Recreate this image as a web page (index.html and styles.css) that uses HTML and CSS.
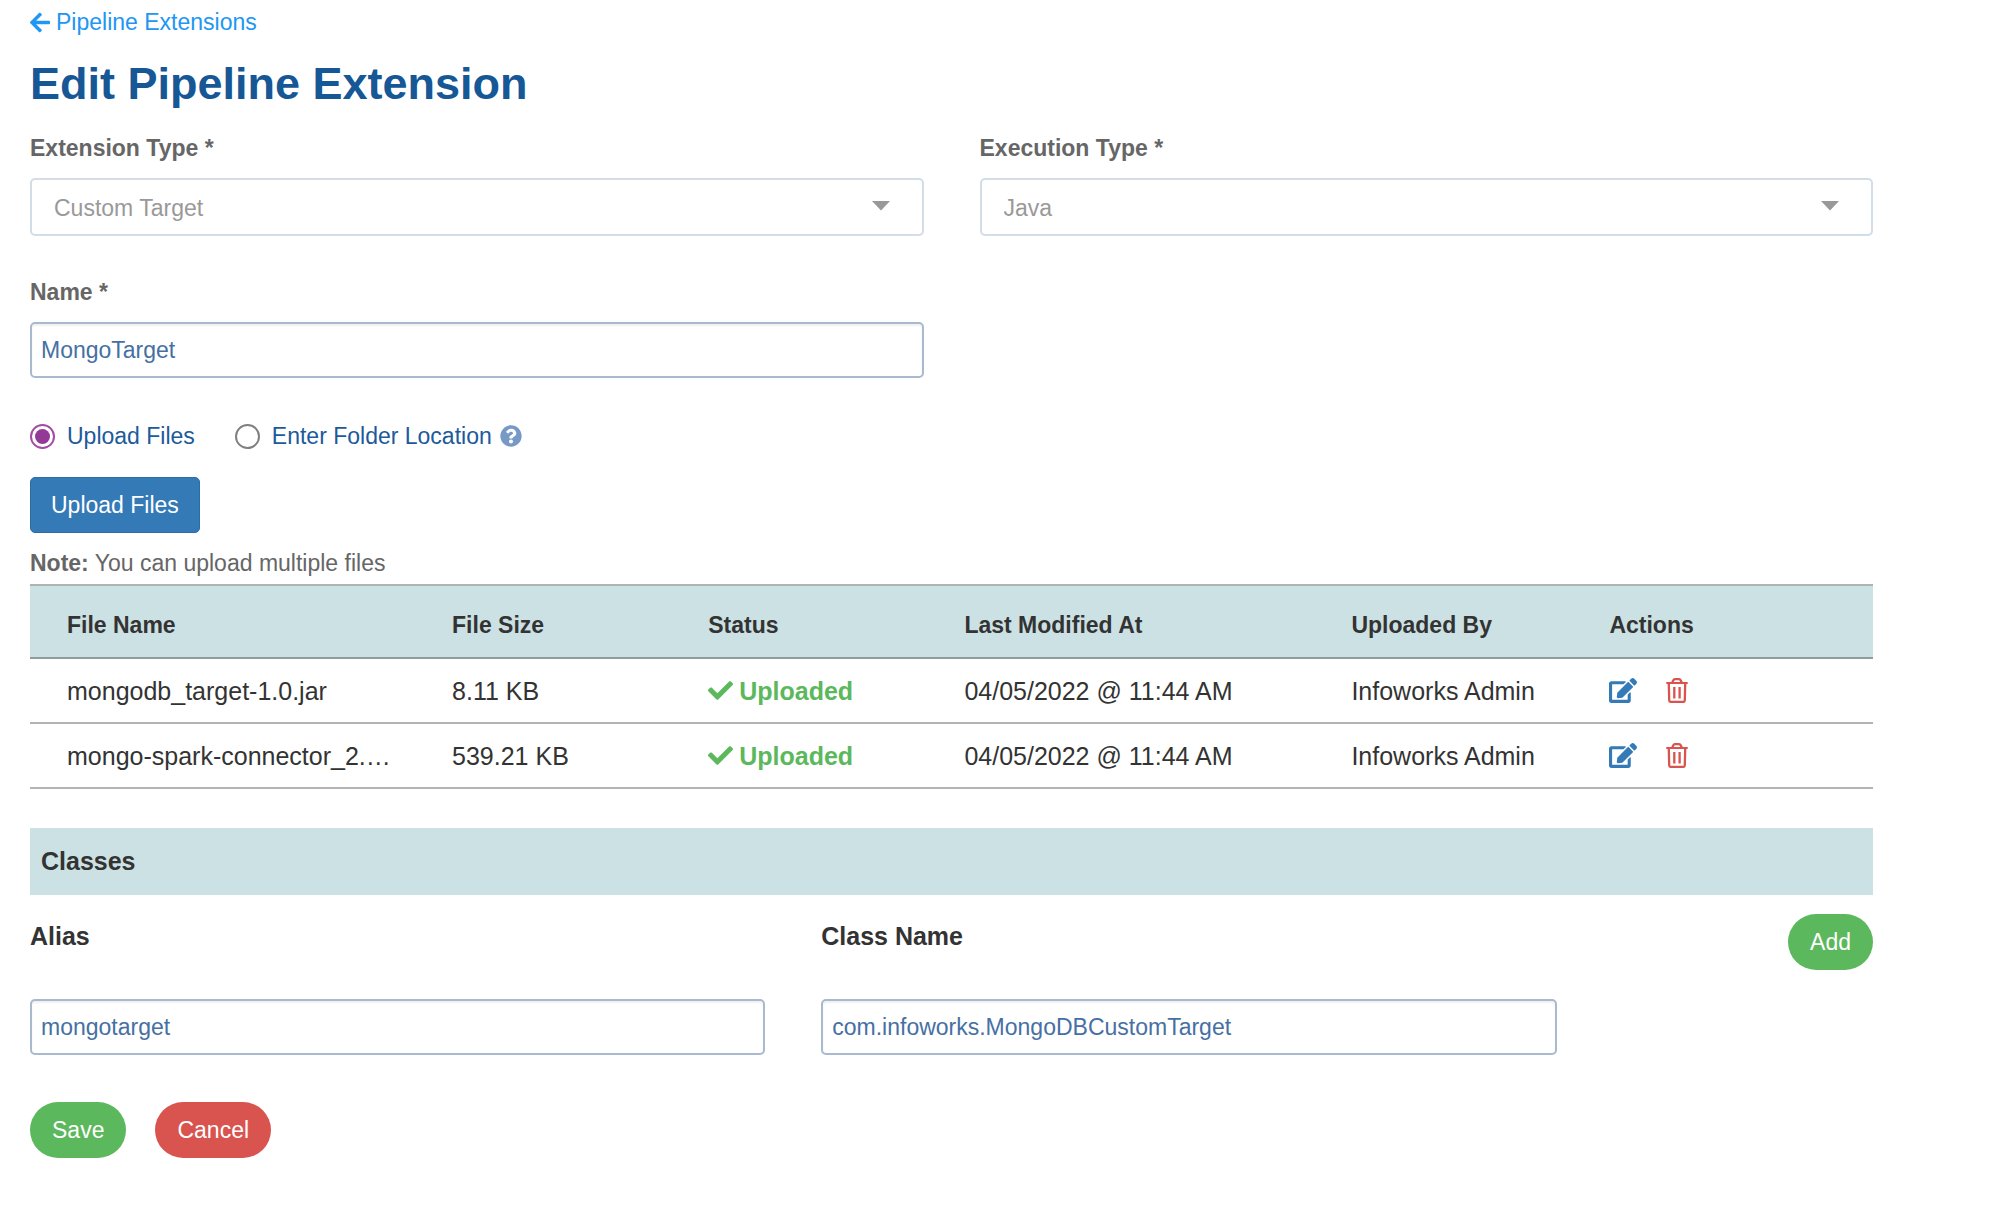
FILE: index.html
```html
<!DOCTYPE html>
<html lang="en">
<head>
  <meta charset="utf-8">
  <meta name="viewport" content="width=device-width, initial-scale=1">
  <title>Edit Pipeline Extension</title>
  <link rel="stylesheet" href="styles.css">
</head>
<body>
  <svg class="sprite" width="0" height="0" aria-hidden="true">
    <symbol id="arrow-left" viewBox="0 0 448 512"><path d="M257.5 445.1l-22.2 22.2c-9.4 9.4-24.6 9.4-33.9 0L7 273c-9.4-9.4-9.4-24.6 0-33.9L201.4 44.7c9.4-9.4 24.6-9.4 33.9 0l22.2 22.2c9.5 9.5 9.3 25-.4 34.3L136.6 216H424c13.3 0 24 10.7 24 24v32c0 13.3-10.7 24-24 24H136.6l120.5 114.8c9.8 9.3 10 24.8.4 34.3z"/></symbol>
    <symbol id="help" viewBox="0 0 512 512"><path d="M504 256c0 136.997-111.043 248-248 248S8 392.997 8 256C8 119.083 119.043 8 256 8s248 111.083 248 248zM262.655 90c-54.497 0-89.255 22.957-116.549 63.758-3.536 5.286-2.353 12.415 2.715 16.258l34.699 26.31c5.205 3.947 12.621 3.008 16.665-2.122 17.864-22.658 30.113-35.797 57.303-35.797 20.429 0 45.698 13.148 45.698 32.958 0 14.976-12.363 22.667-32.534 33.976C247.128 238.528 216 254.941 216 296v4c0 6.627 5.373 12 12 12h56c6.627 0 12-5.373 12-12v-1.333c0-28.462 83.186-29.647 83.186-106.667 0-58.002-60.165-102-116.531-102zM256 338c-25.365 0-46 20.635-46 46 0 25.364 20.635 46 46 46s46-20.636 46-46c0-25.364-20.635-46-46-46z"/></symbol>
    <symbol id="check" viewBox="0 0 512 512"><path d="M173.898 439.404l-166.4-166.4c-9.997-9.997-9.997-26.206 0-36.204l36.203-36.204c9.997-9.998 26.207-9.998 36.204 0L192 312.69 432.095 72.596c9.997-9.997 26.207-9.997 36.204 0l36.203 36.204c9.997 9.997 9.997 26.206 0 36.204l-294.4 294.401c-9.998 9.997-26.207 9.997-36.204-.001z"/></symbol>
    <symbol id="edit" viewBox="0 0 576 512"><path d="M402.6 83.2l90.2 90.2c3.8 3.8 3.8 10 0 13.8L274.4 405.6l-92.8 10.3c-12.4 1.4-22.9-9.1-21.5-21.5l10.3-92.8L388.8 83.2c3.8-3.8 10-3.8 13.8 0zm162-22.9l-48.8-48.8c-15.2-15.2-39.9-15.2-55.2 0l-35.4 35.4c-3.8 3.8-3.8 10 0 13.8l90.2 90.2c3.8 3.8 10 3.8 13.8 0l35.4-35.4c15.2-15.3 15.2-40 0-55.2zM384 346.2V448H64V128h229.8c3.2 0 6.2-1.3 8.5-3.5l40-40c7.6-7.6 2.1-20.5-8.5-20.5H48C21.5 64 0 85.5 0 112v352c0 26.5 21.5 48 48 48h352c26.5 0 48-21.5 48-48V306.2c0-10.7-12.9-16-20.5-8.5l-40 40c-2.2 2.3-3.5 5.3-3.5 8.5z"/></symbol>
    <symbol id="trash" viewBox="0 0 22 25"><g fill="none" stroke="currentColor" stroke-width="2.3"><path d="M0.3 5H21.7" stroke-width="2"/><path d="M6.2 4.8L7.2 2.5Q7.8 1.2 9 1.2H13Q14.2 1.2 14.8 2.5L15.8 4.8"/><path d="M2.8 5.5L3.2 22.2Q3.3 23.9 5 23.9H17Q18.7 23.9 18.8 22.2L19.2 5.5"/><path d="M8.3 9V20.5M13.6 9V20.5"/></g></symbol>
    <symbol id="caret" viewBox="0 0 18 10"><path d="M0 0H18L9 9.5Z"/></symbol>
  </svg>

  <main class="page">
    <a class="back" href="#"><svg class="back-icon" aria-hidden="true"><use href="#arrow-left"/></svg>Pipeline Extensions</a>
    <h1 class="title">Edit Pipeline Extension</h1>

    <form class="form">
      <div class="grid">
        <div class="field half">
          <label class="label" for="ext-type">Extension Type *</label>
          <div class="select-box">
            <select class="select" id="ext-type" disabled><option>Custom Target</option></select>
            <svg class="caret" aria-hidden="true"><use href="#caret"/></svg>
          </div>
        </div>
        <div class="field half">
          <label class="label" for="exec-type">Execution Type *</label>
          <div class="select-box">
            <select class="select" id="exec-type" disabled><option>Java</option></select>
            <svg class="caret" aria-hidden="true"><use href="#caret"/></svg>
          </div>
        </div>
        <div class="field half">
          <label class="label" for="name">Name *</label>
          <input class="input" id="name" type="text" value="MongoTarget">
        </div>
      </div>

      <div class="options">
        <label class="option"><input class="radio" type="radio" name="source" checked>Upload Files</label>
        <div class="option-help">
          <label class="option"><input class="radio" type="radio" name="source">Enter Folder Location</label>
          <svg class="help-icon" aria-hidden="true"><use href="#help"/></svg>
        </div>
      </div>

      <button class="btn btn-upload" type="button">Upload Files</button>
      <p class="note"><strong>Note:</strong> You can upload multiple files</p>

      <table class="files">
        <colgroup>
          <col class="col-file"><col class="col-size"><col class="col-status"><col class="col-date"><col class="col-user"><col class="col-actions">
        </colgroup>
        <thead>
          <tr><th>File Name</th><th>File Size</th><th>Status</th><th>Last Modified At</th><th>Uploaded By</th><th>Actions</th></tr>
        </thead>
        <tbody>
          <tr>
            <td>mongodb_target-1.0.jar</td>
            <td>8.11 KB</td>
            <td><span class="status"><svg class="check-icon" aria-hidden="true"><use href="#check"/></svg>Uploaded</span></td>
            <td>04/05/2022 @ 11:44 AM</td>
            <td>Infoworks Admin</td>
            <td><div class="actions">
              <button class="icon-btn edit" type="button" aria-label="Edit"><svg class="edit-icon"><use href="#edit"/></svg></button>
              <button class="icon-btn delete" type="button" aria-label="Delete"><svg class="trash-icon"><use href="#trash"/></svg></button>
            </div></td>
          </tr>
          <tr>
            <td>mongo-spark-connector_2.…</td>
            <td>539.21 KB</td>
            <td><span class="status"><svg class="check-icon" aria-hidden="true"><use href="#check"/></svg>Uploaded</span></td>
            <td>04/05/2022 @ 11:44 AM</td>
            <td>Infoworks Admin</td>
            <td><div class="actions">
              <button class="icon-btn edit" type="button" aria-label="Edit"><svg class="edit-icon"><use href="#edit"/></svg></button>
              <button class="icon-btn delete" type="button" aria-label="Delete"><svg class="trash-icon"><use href="#trash"/></svg></button>
            </div></td>
          </tr>
        </tbody>
      </table>

      <h2 class="section">Classes</h2>
      <div class="grid classes">
        <div class="class-field">
          <label class="class-label" for="alias">Alias</label>
          <input class="input" id="alias" type="text" value="mongotarget">
        </div>
        <div class="class-field">
          <label class="class-label" for="class-name">Class Name</label>
          <input class="input" id="class-name" type="text" value="com.infoworks.MongoDBCustomTarget">
        </div>
        <div class="class-add">
          <button class="btn btn-pill btn-green" type="button">Add</button>
        </div>
      </div>

      <div class="footer">
        <button class="btn btn-pill btn-green" type="submit">Save</button>
        <button class="btn btn-pill btn-red" type="button">Cancel</button>
      </div>
    </form>
  </main>
</body>
</html>
```
FILE: styles.css
```css
* {
  box-sizing: border-box;
}

body {
  margin: 0;
  background: #fff;
  color: #333;
  font-family: "Liberation Sans", Arial, Helvetica, sans-serif;
  font-size: 23px;
  line-height: 28px;
}

button,
input,
select {
  font: inherit;
}

svg {
  display: block;
  flex: none;
  fill: currentColor;
}

.sprite {
  position: absolute;
}

.page {
  padding: 8px 126px 48px 30px;
}

.back {
  display: inline-flex;
  align-items: center;
  gap: 6px;
  color: #2196f3;
  text-decoration: none;
  vertical-align: top;
}

.back-icon {
  width: 20px;
  height: 23px;
}

.title {
  margin: 22px 0 24px;
  color: #165796;
  font-size: 45px;
  line-height: 52px;
}

.grid {
  display: grid;
  grid-template-columns: repeat(12, 1fr);
  column-gap: 56px;
  row-gap: 42px;
}

.field {
  display: flex;
  flex-direction: column;
  gap: 16px;
}

.half {
  grid-column: span 6;
}

.label {
  color: #666;
  font-weight: bold;
}

.select-box {
  display: grid;
  align-items: center;
}

.select-box > * {
  grid-area: 1 / 1;
}

.select {
  appearance: none;
  width: 100%;
  height: 58px;
  padding: 2px 60px 0 22px;
  border: 2px solid #d3dde7;
  border-radius: 5px;
  background: #fff;
  color: #999;
  opacity: 1;
}

.caret {
  justify-self: end;
  width: 18px;
  height: 10px;
  margin: 0 34px 2px 0;
  color: #999;
  pointer-events: none;
}

.input {
  width: 100%;
  height: 56px;
  padding: 0 9px;
  border: 2px solid #a9b9ce;
  border-radius: 5px;
  background: #fff;
  box-shadow: inset 0 2px 2px #eef0f3;
  color: #4670a3;
}

.options {
  display: flex;
  gap: 40px;
  margin: 44px 0 27px;
}

.option {
  display: flex;
  align-items: center;
  gap: 12px;
  color: #1c5a9b;
}

.option-help {
  display: flex;
  align-items: center;
  gap: 8px;
}

.help-icon {
  width: 22px;
  height: 22px;
  color: #7699c6;
}

.radio {
  appearance: none;
  display: grid;
  place-items: center;
  width: 25px;
  height: 25px;
  margin: 0;
  border: 2px solid #808080;
  border-radius: 50%;
}

.radio:checked {
  border-color: #a34ba7;
}

.radio:checked::before {
  content: "";
  width: 15px;
  height: 15px;
  border-radius: 50%;
  background: #933a97;
}

.btn {
  height: 56px;
  border: 0;
  color: #fff;
}

.btn-upload {
  display: block;
  padding: 0 20px;
  border: 1px solid #2e6da4;
  border-radius: 5px;
  background: #337ab7;
}

.btn-pill {
  padding: 0 22px;
  border-radius: 28px;
}

.btn-green {
  background: #5cb85c;
}

.btn-red {
  background: #d9534f;
}

.note {
  margin: 16px 0 7px;
  color: #666;
}

.files {
  width: 100%;
  border-collapse: separate;
  border-spacing: 0;
  table-layout: fixed;
  text-align: left;
}

.col-file {
  width: 22.9%;
}

.col-size,
.col-status {
  width: 13.9%;
}

.col-date {
  width: 21%;
}

.col-user {
  width: 14%;
}

.col-actions {
  width: 14.3%;
}

.files th {
  padding: 25px 0 18px;
  border-top: 2px solid #adb3b3;
  border-bottom: 2px solid #8f9d9e;
  background: #cce1e3;
}

.files td {
  height: 65px;
  padding: 0;
  border-bottom: 2px solid #b3b3b3;
  font-size: 25px;
  line-height: 30px;
  white-space: nowrap;
}

.files th:first-child,
.files td:first-child {
  padding-left: 37px;
}

.status {
  display: flex;
  align-items: center;
  gap: 6px;
  color: #5cb85c;
  font-weight: bold;
}

.check-icon {
  width: 25px;
  height: 25px;
}

.actions {
  display: flex;
  align-items: center;
  gap: 29px;
}

.icon-btn {
  padding: 0;
  border: 0;
  background: none;
}

.edit {
  color: #337ab7;
}

.delete {
  color: #d9534f;
}

.edit-icon {
  width: 28px;
  height: 25px;
}

.trash-icon {
  width: 22px;
  height: 25px;
}

.section {
  margin: 39px 0 19px;
  padding: 18px 11px 19px;
  background: #cce1e3;
  font-size: 25px;
  line-height: 30px;
}

.class-field {
  display: flex;
  grid-column: span 5;
  flex-direction: column;
  gap: 48px;
  padding-top: 7px;
}

.class-label {
  font-size: 25px;
  font-weight: bold;
  line-height: 30px;
}

.class-add {
  grid-column: span 2;
  text-align: right;
}

.footer {
  display: flex;
  gap: 29px;
  margin-top: 47px;
}
```
